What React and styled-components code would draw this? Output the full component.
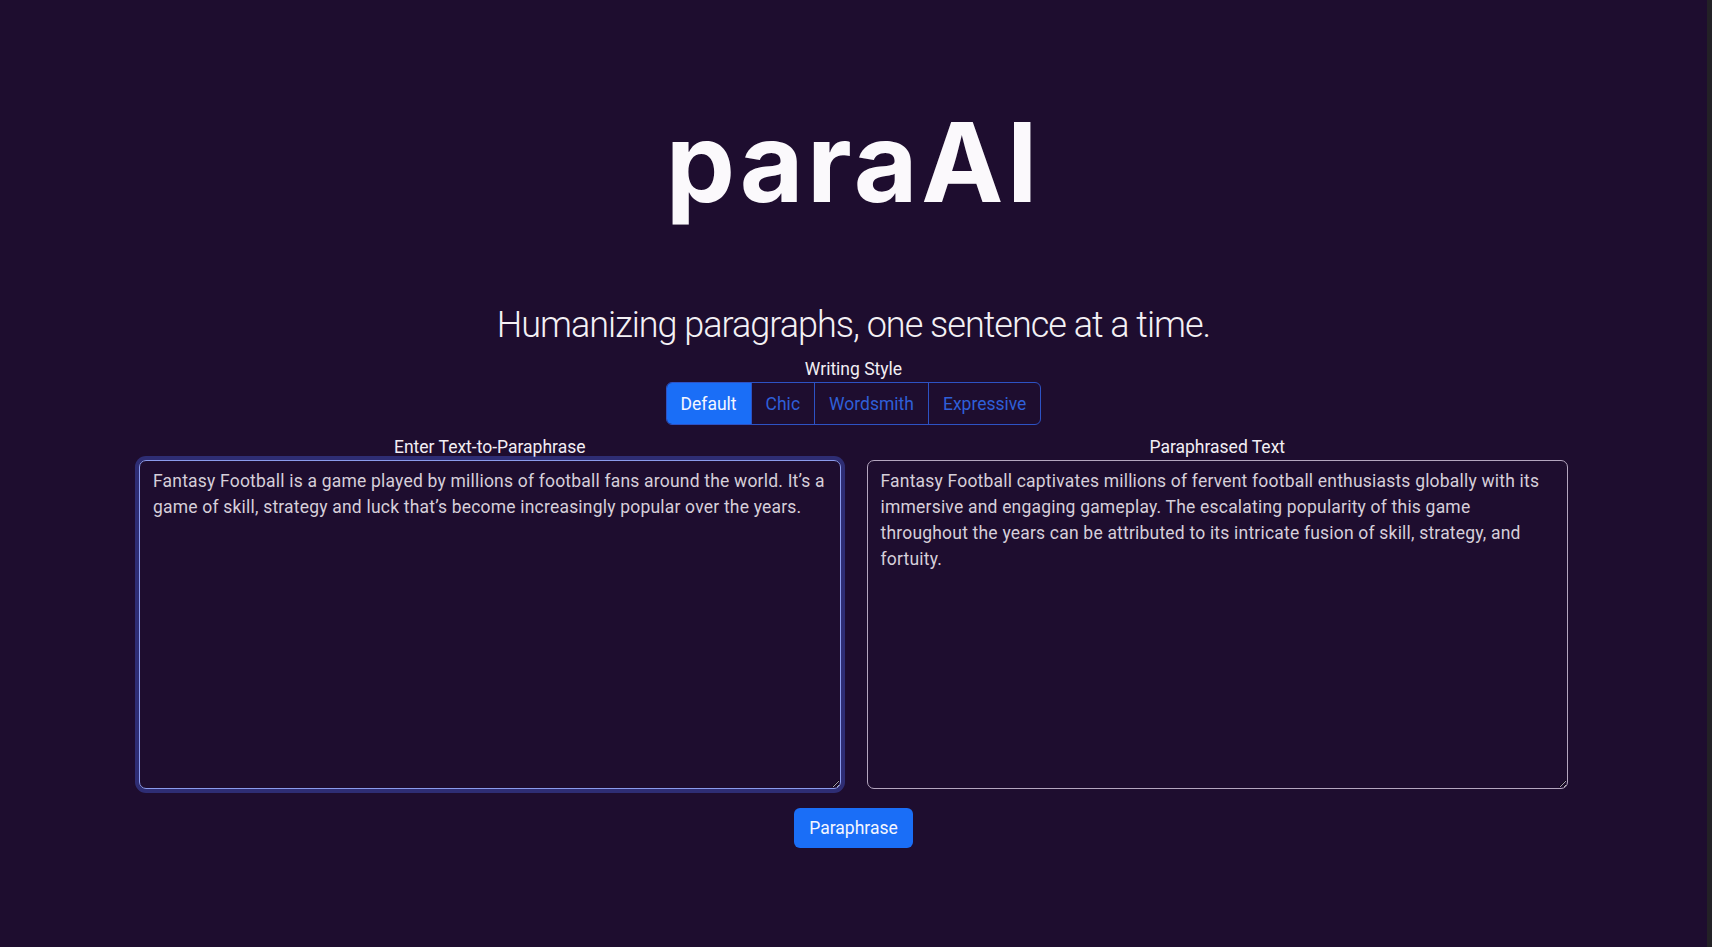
import React, { useState } from "react";
import styled, { createGlobalStyle } from "styled-components";

const GlobalStyle = createGlobalStyle`
    html, body {
        margin: 0;
        padding: 0;
        background: #1e0d2f;
    }
    body {
        font-family: Roboto, "Liberation Sans", sans-serif;
        color: #f2eef4;
    }
`;

const Page = styled.div`
    display: flex;
    min-height: 100vh;
    background: #1e0d2f;
`;

const Main = styled.main`
    flex: 1;
    display: flex;
    flex-direction: column;
    align-items: center;
`;

/* grey strip on the right, like a window scrollbar track */
const ScrollTrack = styled.div`
    width: 5px;
    background: #232126;
`;

const Title = styled.h1`
    margin: 96px 0 0;
    font-family: Inter, "Open Sans", sans-serif;
    font-weight: 700;
    font-size: 110px;
    line-height: 1.2;
    letter-spacing: 3.5px;
    color: #fbf9fc;
`;

const Tagline = styled.h2`
    margin: 80px 0 0;
    font-family: Roboto, sans-serif;
    font-weight: 300;
    font-size: 36px;
    line-height: 34px;
    letter-spacing: -1px;
    color: #f4f1f5;
`;

const SmallLabel = styled.div`
    margin-top: ${(props) => props.offset || 0}px;
    font-size: 17.5px;
    line-height: 18px;
    color: #f2eef4;
    text-align: center;
`;

const ButtonGroup = styled.div`
    display: flex;
    margin-top: 4px;
    border: 1px solid #2d52c4;
    border-radius: 6px;
    overflow: hidden;
`;

const StyleButton = styled.button`
    height: 41px;
    padding: 0 14px;
    border: none;
    border-left: ${(props) => (props.first ? "none" : "1px solid #2d52c4")};
    background: ${(props) => (props.active ? "#1a6ef7" : "transparent")};
    color: ${(props) => (props.active ? "#f4f6ff" : "#2f5fd8")};
    font-family: Roboto, sans-serif;
    font-size: 17.5px;
    cursor: pointer;
`;

const Row = styled.div`
    display: grid;
    grid-template-columns: 1fr 1fr;
    gap: 26px;
    width: 1429px;
    margin-top: 13px;
`;

const Column = styled.div`
    display: flex;
    flex-direction: column;
    gap: 4px;
`;

const TextBox = styled.textarea`
    box-sizing: border-box;
    height: 329px;
    padding: 7px 13px;
    border-radius: 7px;
    border: 1.5px solid ${(props) => (props.focused ? "#8b9bec" : "#b4a6bf")};
    box-shadow: ${(props) => (props.focused ? "0 0 0 4px rgba(70, 95, 220, 0.4)" : "none")};
    background: transparent;
    color: #d6cfda;
    font-family: Roboto, sans-serif;
    font-size: 17.5px;
    line-height: 26px;
    letter-spacing: 0.2px;
    outline: none;
    resize: vertical;
`;

const SubmitButton = styled.button`
    margin-top: 19px;
    height: 40px;
    padding: 0 15px;
    border: none;
    border-radius: 6px;
    background: #1a6ef7;
    color: #f4f6ff;
    font-family: Roboto, sans-serif;
    font-size: 17.5px;
    cursor: pointer;
`;

const styles = ["Default", "Chic", "Wordsmith", "Expressive"];

const inputText =
    "Fantasy Football is a game played by millions of football fans around the world. It\u2019s a game of skill, strategy and luck that\u2019s become increasingly popular over the years.";

const outputText =
    "Fantasy Football captivates millions of fervent football enthusiasts globally with its immersive and engaging gameplay. The escalating popularity of this game throughout the years can be attributed to its intricate fusion of skill, strategy, and fortuity.";

const App = () => {
    const [style, setStyle] = useState("Default");
    const [text, setText] = useState(inputText);

    return (
        <Page>
            <GlobalStyle />
            <Main>
                <Title>paraAI</Title>
                <Tagline>Humanizing paragraphs, one sentence at a time.</Tagline>
                <SmallLabel offset={18}>Writing Style</SmallLabel>
                <ButtonGroup>
                    {styles.map((s, i) => (
                        <StyleButton
                            key={s}
                            first={i === 0}
                            active={style === s}
                            onClick={() => setStyle(s)}
                        >
                            {s}
                        </StyleButton>
                    ))}
                </ButtonGroup>
                <Row>
                    <Column>
                        <SmallLabel>Enter Text-to-Paraphrase</SmallLabel>
                        <TextBox focused value={text} onChange={(e) => setText(e.target.value)} />
                    </Column>
                    <Column>
                        <SmallLabel>Paraphrased Text</SmallLabel>
                        <TextBox value={outputText} readOnly />
                    </Column>
                </Row>
                <SubmitButton>Paraphrase</SubmitButton>
            </Main>
            <ScrollTrack />
        </Page>
    );
};

export default App;
